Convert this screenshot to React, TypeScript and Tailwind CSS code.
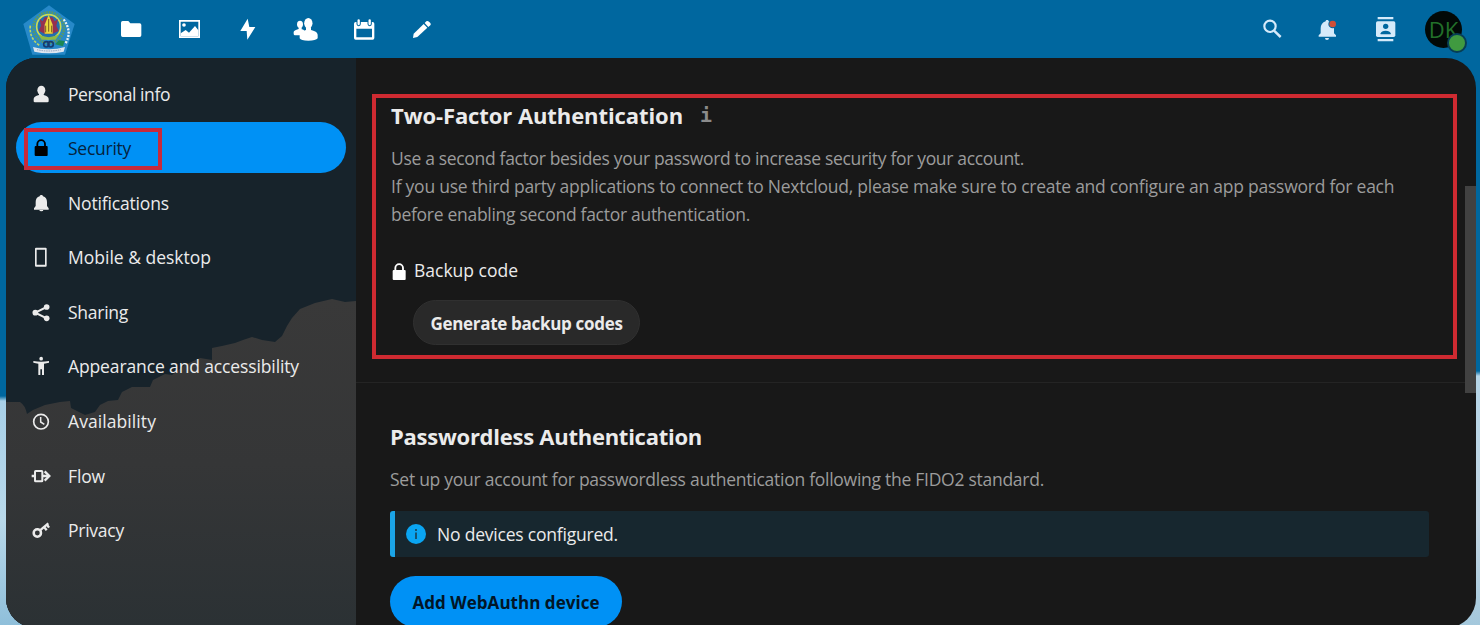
import type { ReactNode } from "react";

function Icon({ children }: { children: ReactNode }) {
  return (
    <svg viewBox="0 0 72 72" className="h-6 w-6 shrink-0 overflow-visible" fill="currentColor">
      {children}
    </svg>
  );
}

const LockShape = () => (
  <>
    <rect x="17" y="30" width="39" height="30" rx="3" />
    <path d="M25 32V24a11.500 11.500 0 0 1 23 0v8" fill="none" stroke="currentColor" strokeWidth="5.500" />
  </>
);

const InkBell = () => (
  <path d="M37 12c-3 0-5 2-5 4-8 2-12 9-12 17v12l-5 7v4h44v-4l-5-7V33c0-8-4-15-12-17 0-2-2-4-5-4zM31 57a6 4 0 0 0 12 0z" />
);

const apps: ReactNode[] = [
  <path d="M11 12h17l6 7h28q5 0 5 5v31q0 5-5 5H11q-5 0-5-5V17q0-5 5-5z" />,
  <>
    <path fillRule="evenodd" d="M6 9h63v54H6zM11 14v44h53V14z" />
    <circle cx="21" cy="24" r="5.500" />
    <path d="M11 58V49L26 39l10 8 18-20 10 13v18z" />
  </>,
  <path d="M38 5L16 42h19l2 26 24-38H43z" />,
  <>
    <ellipse cx="21" cy="22" rx="9" ry="11" />
    <path d="M17 31h9v6c6 1 8 3 8 8l-8 10H6q-4 0-4-5v-5q0-4 15-9z" />
    <ellipse cx="46" cy="19" rx="12.500" ry="16" />
    <path d="M39 31h15v8c14 4 20 8 20 15v10q-5 7-28 7T20 64V54c0-7 5-11 19-15z" />
  </>,
  <>
    <path fillRule="evenodd" d="M14 15h51q5 0 5 5v43q0 5-5 5H14q-5 0-5-5V20q0-5 5-5zM16 35v26h47V35z" />
    <path d="M23 11v10M56 11v10" stroke="#00679f" strokeWidth="13" strokeLinecap="round" />
    <path d="M23 10v11M56 10v11" stroke="currentColor" strokeWidth="7" strokeLinecap="round" />
  </>,
  <>
    <path d="M12 63l2-13 30-29 11 11-30 28z" />
    <path d="M47 18l5-5q4-3 8 1l4 4q3 4 0 7l-6 5z" />
  </>,
];

const nav: { label: string; tracking: string; icon: ReactNode; active?: boolean }[] = [
  {
    label: "Personal info",
    tracking: "tracking-[-0.41px]",
    icon: (
      <>
        <ellipse cx="37" cy="25" rx="12" ry="14" />
        <path d="M30 34h14v5c11 3 15 6 15 12v7q0 3-4 3H18q-4 0-4-3v-7c0-6 5-9 16-12z" />
      </>
    ),
  },
  { label: "Security", tracking: "tracking-[-0.26px]", icon: <LockShape />, active: true },
  { label: "Notifications", tracking: "tracking-[-0.156px]", icon: <InkBell /> },
  {
    label: "Mobile & desktop",
    tracking: "tracking-normal",
    icon: <path fillRule="evenodd" d="M21 8h29q3 0 3 3v51q0 3-3 3H21q-3 0-3-3V11q0-3 3-3zM23 14v45h25V14z" />,
  },
  {
    label: "Sharing",
    tracking: "tracking-[-0.26px]",
    icon: (
      <>
        <path d="M53 21L19 38l34 17" fill="none" stroke="currentColor" strokeWidth="6" />
        <circle cx="53" cy="21" r="8.500" />
        <circle cx="19" cy="38" r="8.500" />
        <circle cx="53" cy="55" r="8.500" />
      </>
    ),
  },
  {
    label: "Appearance and accessibility",
    tracking: "tracking-[-0.124px]",
    icon: (
      <>
        <circle cx="36.500" cy="14" r="5.500" />
        <path d="M13 21q23 4 47 0v5l-15 3v34h-6V46h-5v17h-6V29l-15-3z" />
      </>
    ),
  },
  {
    label: "Availability",
    tracking: "tracking-[0.08px]",
    icon: (
      <>
        <circle cx="36" cy="38" r="22" fill="none" stroke="currentColor" strokeWidth="5" />
        <path d="M35 24v15l11 7" fill="none" stroke="currentColor" strokeWidth="4.500" />
      </>
    ),
  },
  {
    label: "Flow",
    tracking: "tracking-[-0.13px]",
    icon: (
      <>
        <rect x="18" y="21" width="22" height="31" rx="2" fill="none" stroke="currentColor" strokeWidth="6" />
        <path d="M8 36h9M42 36h17" stroke="currentColor" strokeWidth="7" />
        <path d="M47 22l14 14-14 14" fill="none" stroke="currentColor" strokeWidth="7" />
      </>
    ),
  },
  {
    label: "Privacy",
    tracking: "tracking-[-0.245px]",
    icon: (
      <>
        <circle cx="25" cy="45" r="11" fill="none" stroke="currentColor" strokeWidth="7.500" />
        <path d="M33 37L58 16M46 28l7 9M54 20l6 9" fill="none" stroke="currentColor" strokeWidth="7" />
      </>
    ),
  },
];

function Emblem() {
  return (
    <svg viewBox="0 0 156 150" className="h-[50px] w-[52px]">
      <path d="M78 1L155 57 126 149H28L1 57z" fill="#2789c9" />
      <circle cx="77" cy="68" r="46" fill="none" stroke="#5b9a63" strokeWidth="8" strokeDasharray="5 3" />
      <circle cx="77" cy="65" r="36" fill="#226fae" stroke="#c9dc58" strokeWidth="5" />
      <path d="M50 42l9 7 6-12h24l6 12 10-7-5 20 7 16-19 8H65l-18-9 7-15z" fill="#96304f" />
      <path d="M77 29l12 30v27H65V59z" fill="#ead63d" />
      <path d="M77 42v38M68 62v20M86 62v20" stroke="#7c5c24" strokeWidth="3" />
      <path d="M45 88q32 17 64 0l-11 16H56z" fill="#8db946" />
      <circle cx="70" cy="118" r="8" fill="none" stroke="#173b70" strokeWidth="5" />
      <circle cx="83" cy="118" r="8" fill="none" stroke="#173b70" strokeWidth="5" />
      <path d="M96 118l12-12 17 2-5 16z" fill="#1c8754" />
      <path d="M122 43q27 38 5 73" fill="none" stroke="#e8f3ef" strokeWidth="7" strokeDasharray="6 4" />
      <path d="M22 62q-4 40 29 60" fill="none" stroke="#b9d566" strokeWidth="5" strokeDasharray="8 4" />
      <path d="M30 126q48 14 96 0l-4 14q-44 9-88 0z" fill="#dce5ef" />
      <path d="M42 134q35 8 72 0" fill="none" stroke="#8c9db8" strokeWidth="3" strokeDasharray="4 3" />
    </svg>
  );
}

function TopBar() {
  return (
    <header className="flex h-[58px] shrink-0 items-center text-white">
      <div className="flex w-[102px] justify-center pt-0.5 pr-1">
        <Emblem />
      </div>
      <nav className="flex">
        {apps.map((icon, i) => (
          <div key={i} className="flex w-[58px] justify-center">
            <Icon>{icon}</Icon>
          </div>
        ))}
      </nav>
      <div className="ml-auto flex items-center text-[#d5eafa]">
        <div className="mr-[31px]">
          <Icon>
            <circle cx="30" cy="28" r="17" fill="none" stroke="currentColor" strokeWidth="6.500" />
            <path d="M42 41l20 19" stroke="currentColor" strokeWidth="7.500" />
          </Icon>
        </div>
        <div className="mr-[34px]">
          <Icon>
            <path d="M36 9c-3 0-4 2-4 4-10 3-15 11-15 21v15l-6 6v4h52v-4l-6-6V34c0-10-5-18-16-21 0-2-1-4-5-4zM30 63a6 6 0 0 0 12 0z" />
            <circle cx="53" cy="21" r="13" fill="#00679f" />
            <circle cx="53" cy="21" r="10" fill="#d04f38" />
          </Icon>
        </div>
        <div className="mr-[28px]">
          <Icon>
            <path d="M14 0h47v7H14zM14 66h47v7H14z" />
            <rect x="9" y="13" width="58" height="47" rx="5" />
            <circle cx="38" cy="28" r="8" fill="#00679f" />
            <path d="M23 52v-3q2-8 15-8t15 8v3z" fill="#00679f" />
          </Icon>
        </div>
        <div className="relative mr-[18px] flex h-[37px] w-[37px] items-center justify-center rounded-full bg-[#020907]">
          <span className="text-[22px] leading-none text-[#22702a]">DK</span>
          <span className="absolute -right-[5px] -bottom-[5px] h-[20px] w-[20px] rounded-full border-2 border-[#073e55] bg-[#409a40]" />
        </div>
      </div>
    </header>
  );
}

function Sidebar() {
  return (
    <aside className="relative w-[350px] shrink-0 bg-[#17232b] pt-[9px]">
      <svg viewBox="6 58 350 570" className="absolute inset-0 h-full w-full" preserveAspectRatio="none">
        <defs>
          <linearGradient id="cloud" x1="0" y1="0" x2="0" y2="1">
            <stop offset="0" stopColor="#393939" />
            <stop offset="0.5" stopColor="#353637" />
            <stop offset="1" stopColor="#2b3134" />
          </linearGradient>
        </defs>
        <path
          fill="url(#cloud)"
          d="M6 402L20 402Q25 405 27 414L33 410 45 405 60 402 70 401 71 408 85 415 95 412 100 405 108 401 118 400 122 392 132 387 150 387 153 380 165 374 172 375 185 365 200 358 212 360 212 348 222 346 235 343 243 340 252 337 262 340 275 342 282 336 287 326 292 318 300 309 315 303 332 299 345 302 356 301V628H6z"
        />
      </svg>
      <ul className="relative flex flex-col gap-[3.6px] px-[10px]">
        {nav.map((n) => (
          <li
            key={n.label}
            className={
              n.active
                ? "relative flex h-[51px] items-center gap-[15px] rounded-full bg-[#0091f5] pt-0.5 pl-[13px] text-black"
                : "flex h-[51px] items-center gap-[15px] pt-0.5 pl-[13px] text-[#ebebeb]"
            }
          >
            <Icon>{n.icon}</Icon>
            <span className={`text-[17.5px] leading-6 whitespace-nowrap ${n.tracking} ${n.active ? "text-[#06233d]" : ""}`}>
              {n.label}
            </span>
            {n.active && <span className="absolute top-[6px] left-[8px] h-[42px] w-[138px] border-4 border-[#c62a3c]" />}
          </li>
        ))}
      </ul>
    </aside>
  );
}

export default function App() {
  return (
    <div className="flex h-[625px] w-full flex-col overflow-hidden bg-[linear-gradient(to_bottom,#00679f_0,#00679f_396px,#a8d0e8_401px,#b9d9ea_520px,#8fbfda_625px),linear-gradient(to_bottom,#00679f_0,#00679f_371px,#b5d5e8_376px,#c3d5e2_520px,#a4c8dc_625px)] bg-[size:50%_100%,50%_100%] bg-[position:left,right] bg-no-repeat font-['Open_Sans','Noto_Sans',sans-serif]">
      <TopBar />
      <div className="mr-1 ml-1.5 flex h-[570px] shrink-0 overflow-hidden rounded-[30px] bg-[#181818]">
        <Sidebar />
        <main className="relative min-w-0 flex-1">
          <section className="h-[325px] border-b border-[#242424] pt-[41px] pl-[35px]">
            <div className="flex h-8 items-center">
              <h2 className="text-[22px] font-bold tracking-[-0.085px] whitespace-nowrap text-[#ebebeb]">Two-Factor Authentication</h2>
              <span className="ml-[17px] font-['DejaVu_Sans_Mono',monospace] text-[20px] font-bold text-[#8b8b8b]">i</span>
            </div>
            <div className="mt-[13px] text-[17.5px] leading-[28px] whitespace-nowrap text-[#9c9c9c]">
              <p className="tracking-[-0.326px]">Use a second factor besides your password to increase security for your account.</p>
              <p className="tracking-[-0.247px]">
                If you use third party applications to connect to Nextcloud, please make sure to create and configure an app password for each
              </p>
              <p className="tracking-[-0.286px]">before enabling second factor authentication.</p>
            </div>
            <div className="mt-[28px] -ml-[4px] flex h-7 items-center gap-[3px] text-white">
              <div className="pt-1">
                <Icon>
                  <LockShape />
                </Icon>
              </div>
              <span className="text-[17.5px] text-[#ebebeb]">Backup code</span>
            </div>
            <button className="mt-4 ml-[22px] flex h-[45px] w-[227px] items-center justify-center rounded-full border border-[#303030] bg-[#292929] pt-0.5 text-[17px] font-bold tracking-[-0.31px] whitespace-nowrap text-[#ebebeb]">
              Generate backup codes
            </button>
          </section>
          <section className="pt-[37px] pl-[34px]">
            <h2 className="text-[22px] leading-8 font-bold tracking-[-0.257px] text-[#ebebeb]">Passwordless Authentication</h2>
            <p className="mt-[13px] text-[17.5px] leading-[28px] tracking-[-0.267px] text-[#9c9c9c]">
              Set up your account for passwordless authentication following the FIDO2 standard.
            </p>
            <div className="mt-[18px] mr-[47px] flex h-[46px] items-center rounded-[3px] border-l-[5px] border-[#1ba5e8] bg-[#17272f] pl-[11px]">
              <svg viewBox="0 0 20 20" className="h-5 w-5">
                <circle cx="10" cy="10" r="10" fill="#0aa5f2" />
                <path d="M9 5h2v2H9zM9 8.500h2V15H9z" fill="#155372" />
              </svg>
              <span className="ml-[11px] text-[17.5px] tracking-[-0.205px] text-[#ebebeb]">No devices configured.</span>
            </div>
            <button className="mt-[19px] flex h-[51px] w-[232px] items-center justify-center rounded-full bg-[#0091f5] pt-0.5 text-[17px] font-bold tracking-[0.03px] text-[#021526]">
              Add WebAuthn device
            </button>
          </section>
          <div className="absolute top-[36px] left-[16px] h-[265px] w-[1085px] border-4 border-[#cf2a31]" />
          <div className="absolute top-[128px] right-0 h-[207px] w-[11px] bg-[#414141]" />
        </main>
      </div>
    </div>
  );
}
